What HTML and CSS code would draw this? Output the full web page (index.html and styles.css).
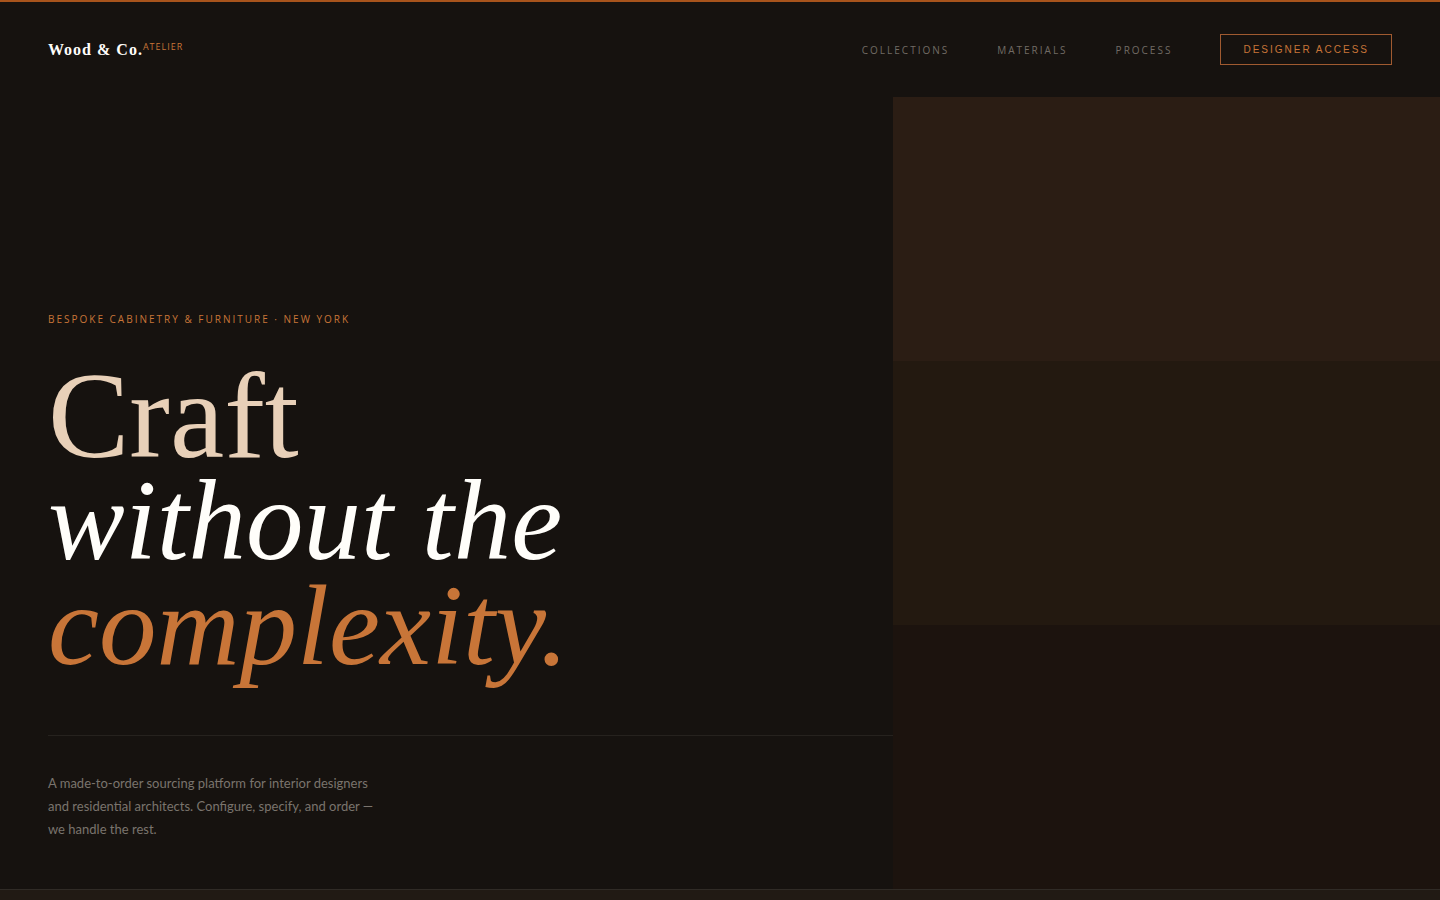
FILE: index.html
```html
<!DOCTYPE html>
<html lang="en">
<head>
    <meta charset="UTF-8">
    <meta name="viewport" content="width=device-width, initial-scale=1.0">
    <title>Wood &amp; Co. Atelier</title>
    <link rel="stylesheet" href="styles.css">
</head>
<body>
    <header class="site-header">
        <a href="#" class="logo">Wood &amp; Co.<span class="logo-tag">Atelier</span></a>
        <nav class="site-nav">
            <a href="#collections">Collections</a>
            <a href="#materials">Materials</a>
            <a href="#process">Process</a>
            <button type="button" class="access-btn">Designer Access</button>
        </nav>
    </header>

    <main>
        <section class="hero">
            <div class="hero-content">
                <p class="eyebrow">Bespoke Cabinetry &amp; Furniture · New York</p>
                <h1 class="hero-title">
                    <span class="line line-first">Craft</span>
                    <em class="line">without the</em>
                    <em class="line accent">complexity.</em>
                </h1>
                <div class="hero-footer">
                    <p class="hero-text">A made-to-order sourcing platform for interior designers and residential architects. Configure, specify, and order — we handle the rest.</p>
                </div>
            </div>
            <div class="hero-panels">
                <div class="panel panel-top"></div>
                <div class="panel panel-middle"></div>
                <div class="panel panel-bottom"></div>
            </div>
        </section>

        <section class="strip" id="collections"></section>
    </main>
</body>
</html>
```
FILE: styles.css
```css
* {
    margin: 0;
    padding: 0;
    box-sizing: border-box;
}

body {
    display: flex;
    flex-direction: column;
    min-height: 100vh;
    font-family: "Open Sans", "Noto Sans", sans-serif;
    background: #16120f;
    color: #e8d5c0;
    border-top: 2px solid #a8541c;
}

main {
    flex: 1;
    display: flex;
    flex-direction: column;
}

/* Header */
.site-header {
    display: flex;
    justify-content: space-between;
    align-items: center;
    padding: 32px 48px;
}

.logo {
    display: flex;
    align-items: flex-start;
    font-family: "Liberation Serif", serif;
    font-size: 16px;
    font-weight: bold;
    line-height: 20px;
    letter-spacing: 1px;
    color: #fffdfa;
    text-decoration: none;
}

.logo-tag {
    font-family: "Open Sans", "Noto Sans", sans-serif;
    font-size: 9px;
    font-weight: 400;
    line-height: 14px;
    letter-spacing: 1px;
    text-transform: uppercase;
    color: #c87538;
}

.site-nav {
    display: flex;
    align-items: center;
    gap: 48px;
}

.site-nav a {
    font-size: 10px;
    letter-spacing: 2px;
    text-transform: uppercase;
    text-decoration: none;
    color: #716b64;
}

.access-btn {
    font-family: "Liberation Sans", sans-serif;
    font-size: 10px;
    line-height: 13px;
    letter-spacing: 2px;
    text-transform: uppercase;
    color: #c87538;
    background: transparent;
    border: 1px solid #a05a30;
    padding: 8px 22px;
    cursor: pointer;
}

/* Hero */
.hero {
    display: grid;
    grid-template-columns: 62fr 38fr;
    min-height: 88vh;
}

.hero-content {
    display: flex;
    flex-direction: column;
    justify-content: flex-end;
    padding: 0 0 48px 48px;
}

.eyebrow {
    font-size: 10px;
    line-height: 16px;
    letter-spacing: 2px;
    text-transform: uppercase;
    color: #c87538;
    margin-bottom: 36px;
}

.hero-title {
    font-family: "Liberation Serif", serif;
    font-size: 115px;
    font-weight: 400;
    line-height: 105px;
    margin-bottom: 57px;
}

.line {
    display: block;
    color: #fffefa;
}

.line-first {
    font-size: 122px;
    color: #e8d0b8;
}

.accent {
    color: #c87538;
}

.hero-footer {
    border-top: 1px solid #26221e;
    padding-top: 36px;
}

.hero-text {
    max-width: 340px;
    font-family: Lato, "Open Sans", sans-serif;
    font-size: 13px;
    line-height: 23px;
    color: #7a746d;
}

.hero-panels {
    display: grid;
    grid-template-rows: repeat(3, 1fr);
}

.panel-top {
    background: #2b1d14;
}

.panel-middle {
    background: #231910;
}

.panel-bottom {
    background: #1c130e;
}

.strip {
    flex: 1;
    background: #211a14;
    border-top: 1px solid #302b26;
}
```
